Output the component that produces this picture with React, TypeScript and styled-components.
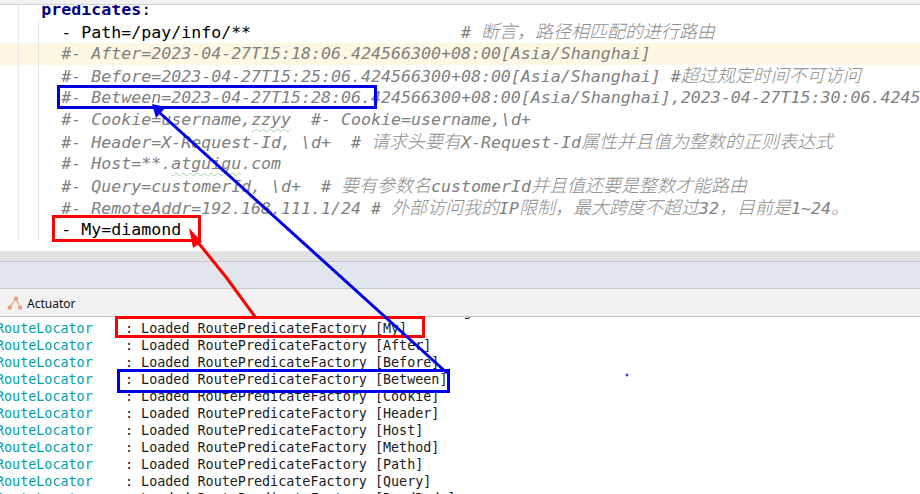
import React from 'react'
import styled, { createGlobalStyle } from 'styled-components'

const GlobalStyle = createGlobalStyle`
	html, body {
		margin: 0;
		padding: 0;
		width: 920px;
		height: 494px;
		overflow: hidden;
		background: #fff;
	}
`

const Page = styled.div`
	position: relative;
	display: flex;
	flex-direction: column;
	width: 920px;
	height: 494px;
	overflow: hidden;
`

const TopBar = styled.div`
	height: 4px;
	flex: none;
	background: #f2f2f2;
	border-bottom: 1px solid #d1d1d1;
`

const Editor = styled.div`
	position: relative;
	height: 246px;
	flex: none;
	overflow: hidden;
	background: #fff;
	font: 16.6px 'DejaVu Sans Mono', monospace;

	&::before {
		content: '';
		position: absolute;
		left: 18px;
		top: 0;
		height: 235px;
		border-left: 1px solid #e8e8e8;
		z-index: 1;
	}

	&::after {
		content: '';
		position: absolute;
		left: 38px;
		top: 15px;
		height: 220px;
		border-left: 1px solid #e4e4e4;
		z-index: 1;
	}
`

const Lines = styled.div`
	margin-top: -6.5px;
`

const Line = styled.div<{ $indent?: number; $comment?: boolean; $active?: boolean }>`
	height: 22.1px;
	line-height: 22.1px;
	padding-left: ${p => p.$indent ?? 61.3}px;
	white-space: pre;
	color: ${p => (p.$comment ? '#808080' : '#000')};
	font-style: ${p => (p.$comment ? 'italic' : 'normal')};
	background: ${p => (p.$active ? '#fdf7e3' : 'transparent')};
`

const Key = styled.span`
	color: #000080;
	font-weight: bold;
`

const Comment = styled.span`
	color: #808080;
	font-style: italic;
`

const Cjk = styled.span`
	font-family: 'Noto Sans CJK SC', sans-serif;
	font-size: 18px;
	font-weight: 300;
	line-height: 1;
	color: #8c8c8c;
`

const Typo = styled.span`
	text-decoration: underline wavy #a6d0a6 1px;
	text-underline-offset: 3px;
`

const Splitter = styled.div`
	height: 10px;
	flex: none;
	background: #e1e1e1;
	border-bottom: 1px solid #c9c9c9;
`

const TabStrip = styled.div`
	height: 26px;
	flex: none;
	background: #e1e5ee;
	border-bottom: 1px solid #c9c9c9;
`

const Toolbar = styled.div`
	display: flex;
	align-items: center;
	gap: 3px;
	height: 26px;
	flex: none;
	padding: 1px 0 0 7px;
	background: #f2f2f2;
	border-bottom: 1px solid #c9c9c9;
	font: 12px 'Noto Sans', sans-serif;
	color: #111;
`

const Console = styled.div`
	flex: 1;
	min-height: 0;
	overflow: hidden;
	background: #fff;
	font: 13.4px 'DejaVu Sans Mono', monospace;
	color: #1a1a1a;
`

const ConsoleRows = styled.div`
	margin-top: -14px;
	margin-left: -4px;
`

const LogRow = styled.div`
	height: 17px;
	line-height: 17px;
	white-space: pre;
`

const Logger = styled.span`
	color: #00a0aa;
`

const Mark = styled.div<{ $color: string; $left: number; $top: number; $width: number; $height: number }>`
	position: absolute;
	left: ${p => p.$left}px;
	top: ${p => p.$top}px;
	width: ${p => p.$width}px;
	height: ${p => p.$height}px;
	box-sizing: border-box;
	border: 3px solid ${p => p.$color};
	z-index: 2;
`

const Arrows = styled.svg`
	position: absolute;
	left: 0;
	top: 0;
	z-index: 3;
	pointer-events: none;
`

function ActuatorIcon() {
	return (
		<svg width='17' height='17' viewBox='0 0 17 17'>
			<path d='M2.5 12.5 L9 3.5 L13 12.5' fill='none' stroke='#f2ab8c' strokeWidth='1.4' />
			<circle cx='2.8' cy='12.6' r='2.2' fill='#f09a78' />
			<circle cx='9' cy='3.6' r='2.2' fill='#f09a78' />
			<circle cx='13.2' cy='12.6' r='2.2' fill='#f09a78' />
		</svg>
	)
}

const factories = ['My', 'After', 'Before', 'Between', 'Cookie', 'Header', 'Host', 'Method', 'Path', 'Query', 'ReadBody']

export default function App() {
	return (
		<Page>
			<GlobalStyle />
			<TopBar />
			<Editor>
				<Lines>
					<Line $indent={41.3}><Key>predicates</Key>:</Line>
					<Line>- Path=/pay/info/**{' '.repeat(21)}<Comment># <Cjk>断言，路径相匹配的进行路由</Cjk></Comment></Line>
					<Line $comment $active>#- After=2023-04-27T15:18:06.424566300+08:00[Asia/Shanghai]</Line>
					<Line $comment>#- Before=2023-04-27T15:25:06.424566300+08:00[Asia/Shanghai] #<Cjk>超过规定时间不可访问</Cjk></Line>
					<Line $comment>#- Between=2023-04-27T15:28:06.424566300+08:00[Asia/Shanghai],2023-04-27T15:30:06.424566300+08:00[Asia/Shanghai]</Line>
					<Line $comment>#- Cookie=username,<Typo>zzyy</Typo>  #- Cookie=username,\d+</Line>
					<Line $comment>#- Header=X-Request-Id, \d+  # <Cjk>请求头要有</Cjk>X-Request-Id<Cjk>属性并且值为整数的正则表达式</Cjk></Line>
					<Line $comment>#- Host=**.<Typo>atguigu</Typo>.com</Line>
					<Line $comment>#- Query=customerId, \d+  # <Cjk>要有参数名</Cjk>customerId<Cjk>并且值还要是整数才能路由</Cjk></Line>
					<Line $comment>#- RemoteAddr=192.168.111.1/24 # <Cjk>外部访问我的</Cjk>IP<Cjk>限制，最大跨度不超过</Cjk>32<Cjk>，目前是</Cjk>1~24<Cjk>。</Cjk></Line>
					<Line>- My=diamond</Line>
				</Lines>
			</Editor>
			<Splitter />
			<TabStrip />
			<Toolbar>
				<ActuatorIcon />
				Actuator
			</Toolbar>
			<Console>
				<ConsoleRows>
					<LogRow>{' '.repeat(39)}g{' '.repeat(18)}g</LogRow>
					{factories.map(name => (
						<LogRow key={name}>
							<Logger>RouteLocator</Logger>    : Loaded RoutePredicateFactory [{name}]
						</LogRow>
					))}
				</ConsoleRows>
			</Console>
			<Mark $color='#0000e6' $left={57} $top={85} $width={320} $height={24} />
			<Mark $color='#ff0000' $left={52} $top={215} $width={149} $height={27} />
			<Mark $color='#ff0000' $left={115} $top={316} $width={310} $height={22} />
			<Mark $color='#0000e6' $left={117} $top={369} $width={333} $height={24} />
			<Arrows width='920' height='494' viewBox='0 0 920 494'>
				<path d='M160 113 L447 373' stroke='#0000e6' strokeWidth='3' fill='none' />
				<path d='M152 104 L166 107 L156 118 Z' fill='#0000e6' />
				<path d='M196 240 L226 277 L256 318' stroke='#ff0000' strokeWidth='3' fill='none' />
				<path d='M189 228 L202 242 L193 248 Z' fill='#ff0000' />
				<path d='M627 373.5 V376.5 M625.5 375 H628.5' stroke='#0000e6' strokeWidth='1' />
			</Arrows>
		</Page>
	)
}
